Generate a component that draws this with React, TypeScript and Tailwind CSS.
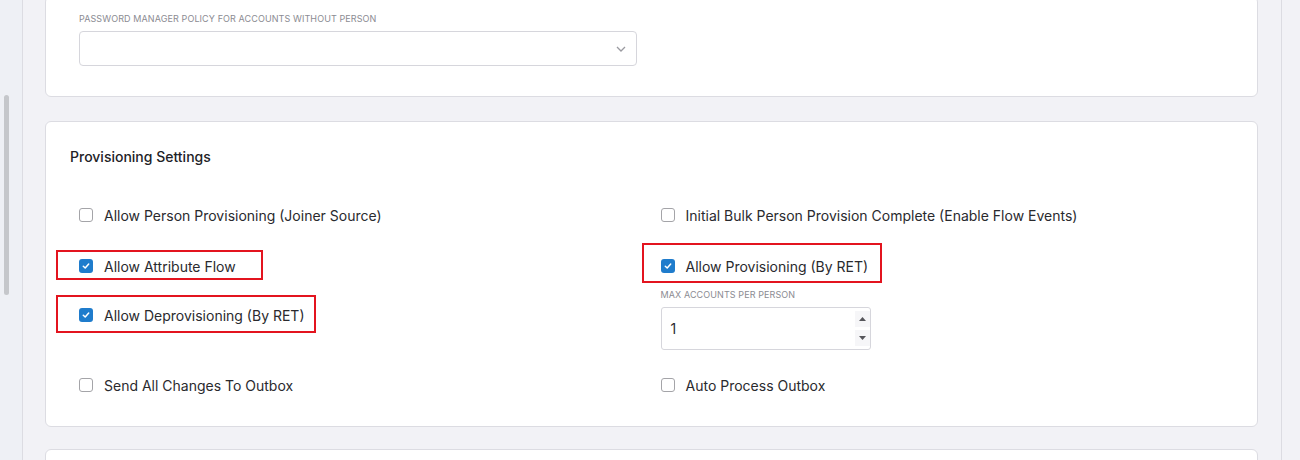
import { ReactNode } from 'react';

const font = { fontFamily: 'Inter, "Noto Sans", sans-serif' };

function Checkbox({ checked }: { checked?: boolean }) {
  if (checked) {
    return (
      <span className="flex h-[14px] w-[14px] shrink-0 items-center justify-center rounded-[3px] bg-[#1f7ccc]">
        <svg width="8" height="8" viewBox="0 0 8 8" fill="none">
          <path d="M1.3 4.2 3.2 6 6.7 2" stroke="#fff" strokeWidth="1.5" strokeLinecap="round" strokeLinejoin="round" />
        </svg>
      </span>
    );
  }
  return <span className="h-[14px] w-[14px] shrink-0 rounded-[3px] border border-[#a4a4a8] bg-white" />;
}

function CheckRow({ label, checked, mark }: { label: string; checked?: boolean; mark?: ReactNode }) {
  return (
    <div className="relative flex h-5 shrink-0 items-center gap-[11px]">
      <Checkbox checked={checked} />
      <span className="text-[14px] text-[#2a2a2e]">{label}</span>
      {mark}
    </div>
  );
}

export default function App() {
  return (
    <div className="flex h-[460px] w-[1300px] overflow-hidden bg-[#f2f2f6]" style={font}>
      {/* left rail with scrollbar */}
      <div className="w-[23px] shrink-0 border-r border-[#dcdce2] bg-[#eef0f5] pl-[4px] pt-[95px]">
        <div className="h-[200px] w-[5px] rounded-full bg-[#c5c7cb]" />
      </div>

      <main className="flex w-[1258px] shrink-0 flex-col pl-[22px] pr-[23px]">
        {/* Password policy card */}
        <section className="-mt-[4px] h-[101px] shrink-0 rounded-md border border-[#dcdce2] bg-white pl-[33px] pt-[16px]">
          <div className="text-[9px] uppercase leading-3 tracking-[0.1px] text-[#8b8b92]">
            Password Manager Policy For Accounts Without Person
          </div>
          <div className="mt-[6px] flex h-[35px] w-[558px] items-center justify-end rounded-[4px] border border-[#d6d6dc] bg-white pr-[10px]">
            <svg width="10" height="6" viewBox="0 0 10 6" fill="none">
              <path d="M1 1l4 4 4-4" stroke="#9a9aa0" strokeWidth="1.3" />
            </svg>
          </div>
        </section>

        {/* Provisioning settings card */}
        <section className="mt-[24px] h-[306px] shrink-0 rounded-md border border-[#dcdce2] bg-white px-[24px] pt-[25px]">
          <h3 className="text-[14px] font-medium leading-5 text-[#222226]">Provisioning Settings</h3>
          <div className="mt-[38px] grid grid-cols-2">
            <div className="flex flex-col pl-[9px]">
              <CheckRow label="Allow Person Provisioning (Joiner Source)" />
              <div className="mt-[31px]">
                <CheckRow
                  label="Allow Attribute Flow"
                  checked
                  mark={<span className="pointer-events-none absolute -left-[23px] -top-[6px] h-[30px] w-[207px] border-2 border-[#e3141f]" />}
                />
              </div>
              <div className="mt-[29px]">
                <CheckRow
                  label="Allow Deprovisioning (By RET)"
                  checked
                  mark={<span className="pointer-events-none absolute -left-[23px] -top-[10px] h-[38px] w-[260px] border-2 border-[#e3141f]" />}
                />
              </div>
              <div className="mt-[50px]">
                <CheckRow label="Send All Changes To Outbox" />
              </div>
            </div>

            <div className="flex flex-col pl-[9px]">
              <CheckRow label="Initial Bulk Person Provision Complete (Enable Flow Events)" />
              <div className="mt-[31px]">
                <CheckRow
                  label="Allow Provisioning (By RET)"
                  checked
                  mark={<span className="pointer-events-none absolute -left-[19px] -top-[13px] h-[40px] w-[240px] border-2 border-[#e3141f]" />}
                />
              </div>
              <div className="mt-[13px] shrink-0 text-[9px] uppercase leading-3 tracking-[0.1px] text-[#8b8b92]">
                Max Accounts Per Person
              </div>
              <div className="mt-[6px] flex h-[43px] w-[210px] shrink-0 items-center justify-between rounded-[3px] border border-[#d6d6dc] bg-white">
                <span className="pl-[9px] text-[14px] text-[#2a2a2e]">1</span>
                <div className="flex h-full w-[15px] flex-col justify-between py-[3px]">
                  <div className="flex h-[16px] items-center justify-center bg-[#f6f6f8]">
                    <svg width="7" height="4" viewBox="0 0 7 4"><path d="M0 4 3.5 0 7 4z" fill="#55555a" /></svg>
                  </div>
                  <div className="flex h-[16px] items-center justify-center bg-[#f6f6f8]">
                    <svg width="7" height="4" viewBox="0 0 7 4"><path d="M0 0h7L3.5 4z" fill="#55555a" /></svg>
                  </div>
                </div>
              </div>
              <div className="mt-[25px]">
                <CheckRow label="Auto Process Outbox" />
              </div>
            </div>
          </div>
        </section>

        {/* next card */}
        <section className="mt-[22px] h-[40px] shrink-0 rounded-md border border-[#dcdce2] bg-white" />
      </main>

      <div className="flex-1 border-l border-[#dcdce2] bg-[#f2f2f6]" />
    </div>
  );
}
